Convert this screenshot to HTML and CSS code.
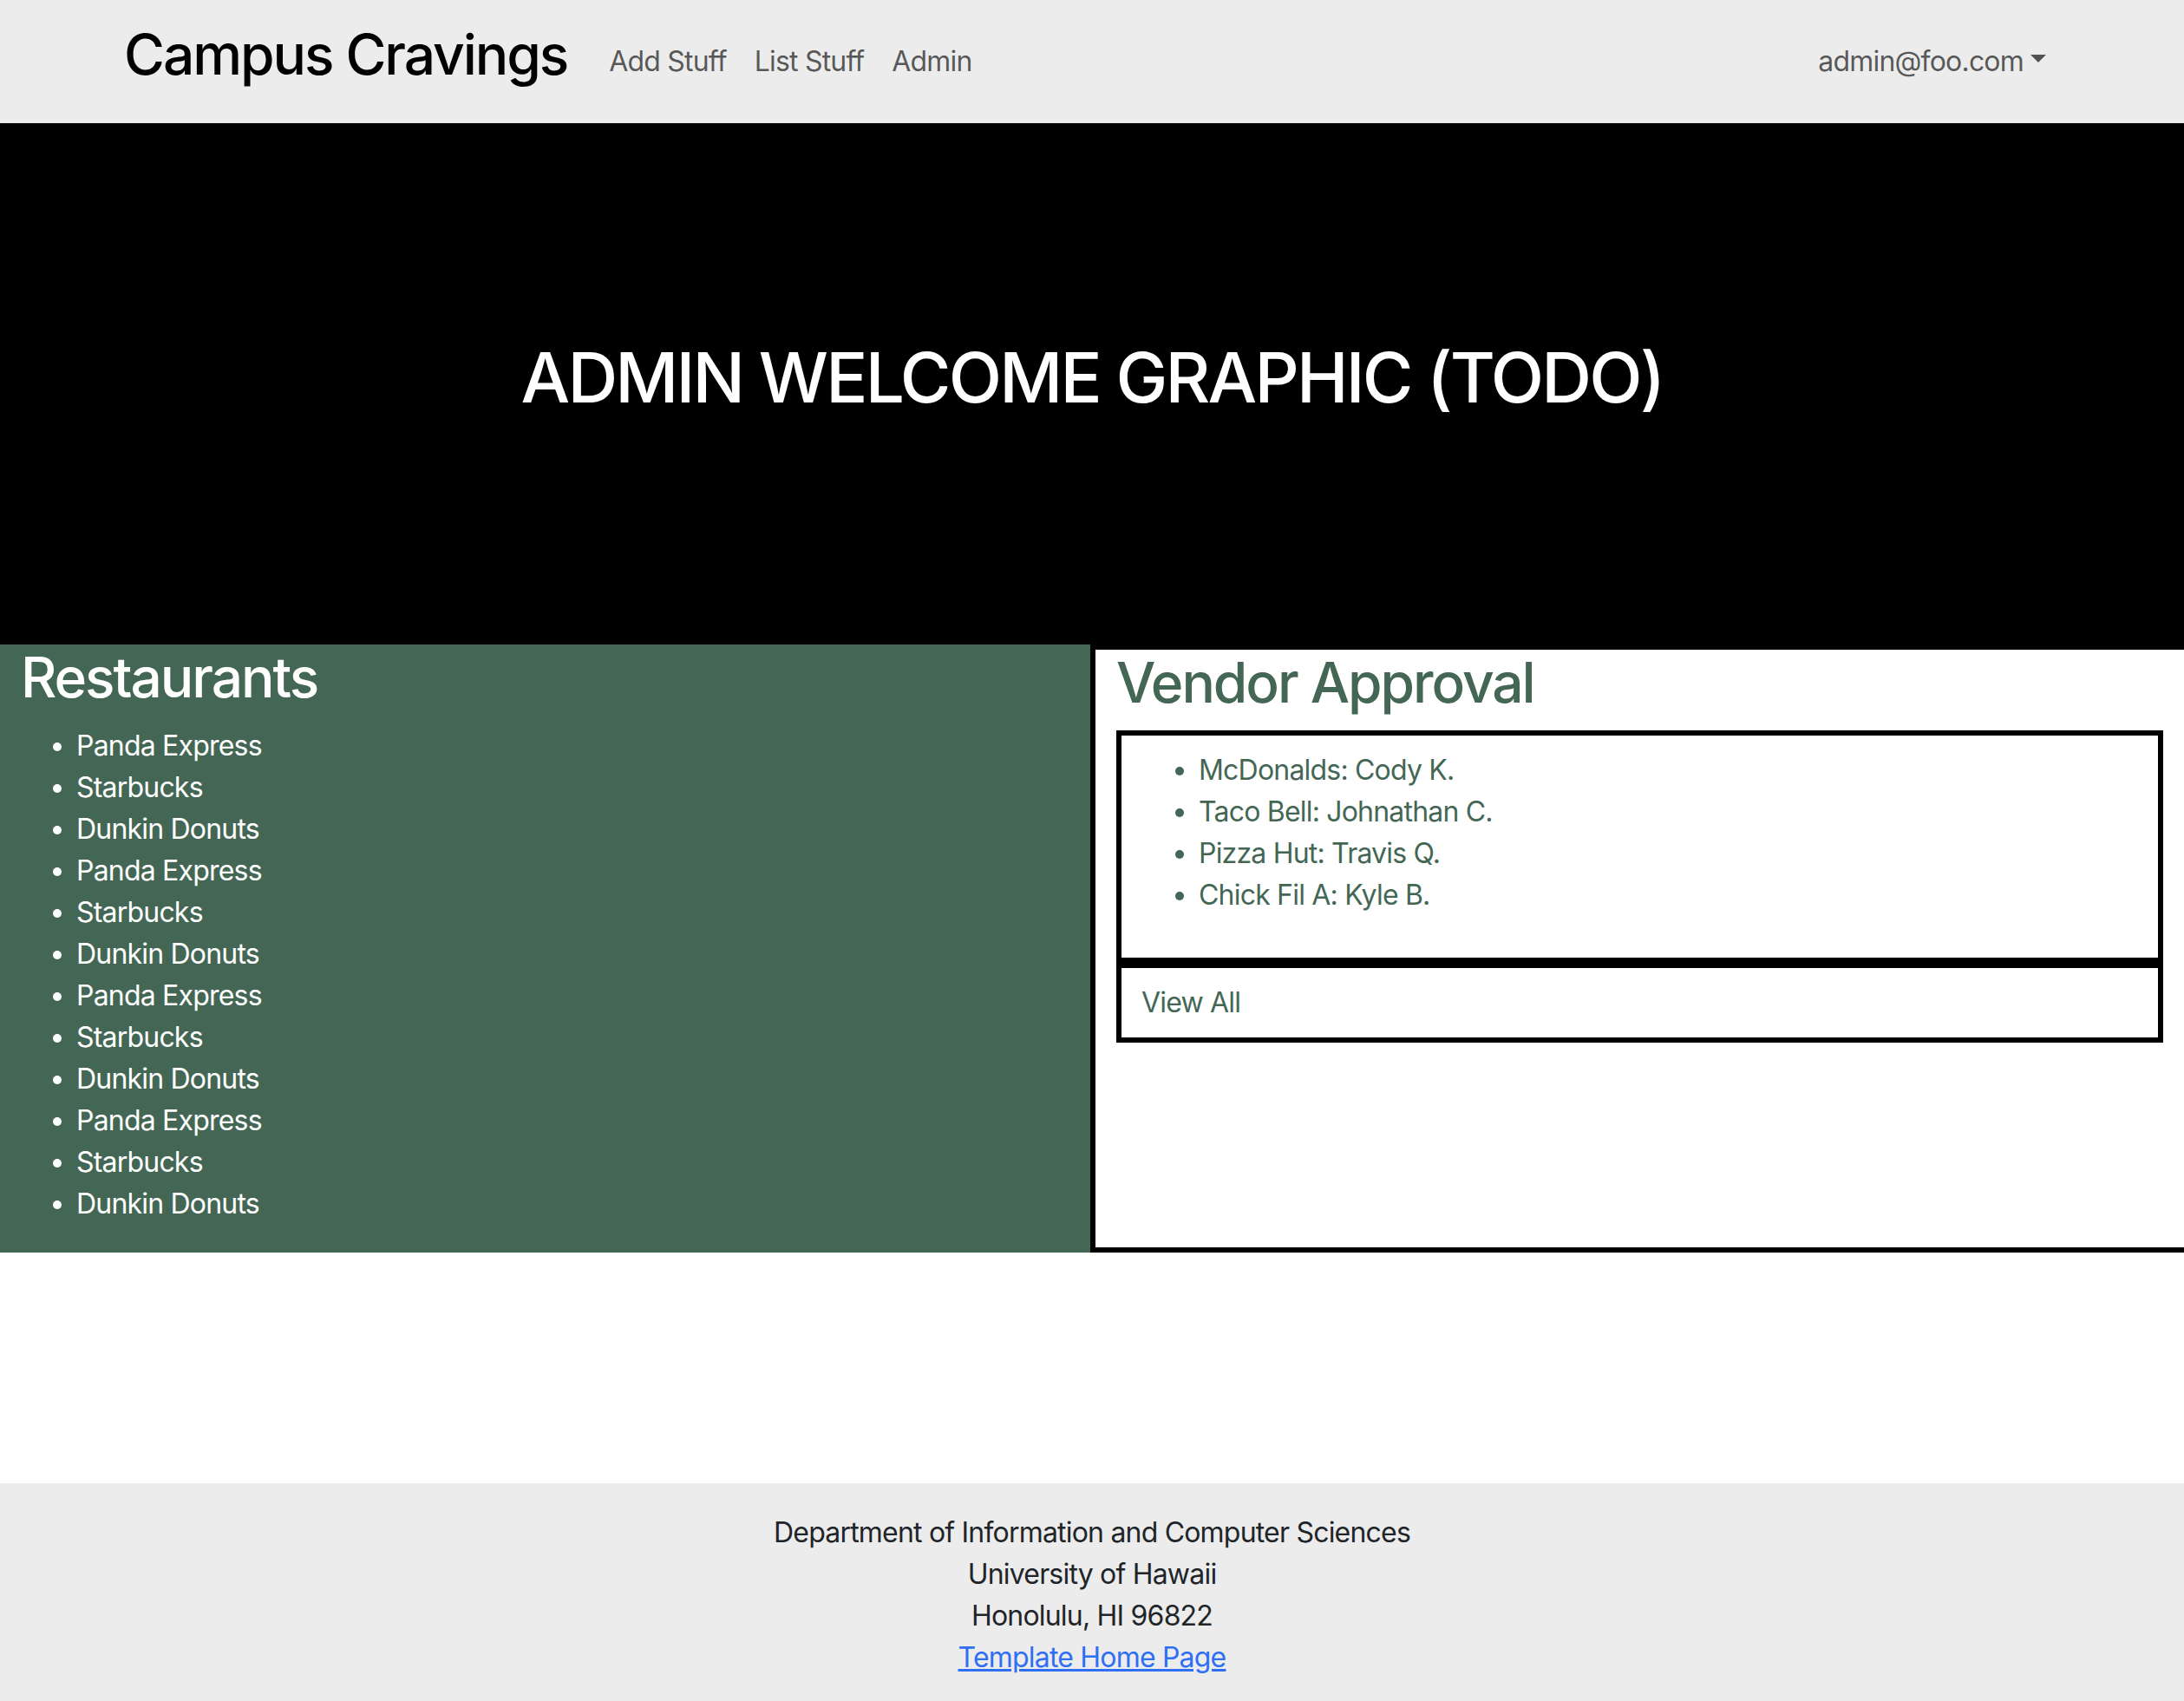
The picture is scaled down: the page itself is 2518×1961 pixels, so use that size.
FILE: index.html
```html
<!DOCTYPE html>
<html lang="en">
<head>
<meta charset="utf-8">
<title>Campus Cravings</title>
<link rel="stylesheet" href="styles.css">
</head>
<body>
<nav class="navbar">
  <div class="nav-container">
    <h2 class="brand">Campus Cravings</h2>
    <ul class="nav-links">
      <li><a class="nav-link" href="#">Add Stuff</a></li>
      <li><a class="nav-link" href="#">List Stuff</a></li>
      <li><a class="nav-link" href="#">Admin</a></li>
    </ul>
    <a class="nav-link user-toggle" href="#">admin@foo.com<span class="caret"></span></a>
  </div>
</nav>

<main class="main">
  <section class="hero">
    <h1 class="hero-title">ADMIN WELCOME GRAPHIC (TODO)</h1>
  </section>

  <div class="row">
    <section class="col restaurants">
      <h2 class="col-title">Restaurants</h2>
      <ul class="list">
        <li>Panda Express</li>
        <li>Starbucks</li>
        <li>Dunkin Donuts</li>
        <li>Panda Express</li>
        <li>Starbucks</li>
        <li>Dunkin Donuts</li>
        <li>Panda Express</li>
        <li>Starbucks</li>
        <li>Dunkin Donuts</li>
        <li>Panda Express</li>
        <li>Starbucks</li>
        <li>Dunkin Donuts</li>
      </ul>
    </section>

    <section class="col vendors">
      <h2 class="col-title vendor-title">Vendor Approval</h2>
      <div class="box">
        <ul class="list vendor-list">
          <li>McDonalds: Cody K.</li>
          <li>Taco Bell: Johnathan C.</li>
          <li>Pizza Hut: Travis Q.</li>
          <li>Chick Fil A: Kyle B.</li>
        </ul>
      </div>
      <div class="box box-footer">View All</div>
    </section>
  </div>
</main>

<footer class="footer">
  <div>Department of Information and Computer Sciences</div>
  <div>University of Hawaii</div>
  <div>Honolulu, HI 96822</div>
  <div><a class="footer-link" href="#">Template Home Page</a></div>
</footer>
</body>
</html>
```

FILE: styles.css
```css
* {
  box-sizing: border-box;
}

html, body {
  margin: 0;
  padding: 0;
}

body {
  font-family: Inter, "Noto Sans", "Liberation Sans", sans-serif;
  font-size: 32px;
  line-height: 1.5;
  letter-spacing: -0.025em;
  color: #212529;
  background: #fff;
}

h1, h2 {
  font-weight: 500;
  line-height: 1.2;
  margin: 0 0 16px 0;
  letter-spacing: -0.032em;
}

/* Navbar */
.navbar {
  background: #ececec;
  height: 142px;
  display: flex;
  align-items: center;
}

.nav-container {
  width: 2280px;
  margin: 0 auto;
  padding: 0 24px;
  display: flex;
  align-items: center;
}

.brand {
  font-size: 64px;
  color: #000;
  margin-right: 32px;
}

.nav-links {
  list-style: none;
  margin: 0;
  padding: 0;
  display: flex;
}

.nav-link {
  display: block;
  padding: 16px;
  color: rgba(0, 0, 0, 0.65);
  text-decoration: none;
}

.user-toggle {
  margin-left: auto;
  display: flex;
  align-items: center;
}

.caret {
  display: inline-block;
  margin-left: 8px;
  border-top: 9.6px solid rgba(0, 0, 0, 0.65);
  border-left: 9.6px solid transparent;
  border-right: 9.6px solid transparent;
  border-bottom: 0;
  position: relative;
  top: -3px;
}

/* Hero */
.hero {
  background: #000;
  height: 601px;
  display: flex;
  align-items: center;
  justify-content: center;
}

.hero-title {
  color: #fff;
  font-size: 80px;
  letter-spacing: -0.035em;
}

/* Columns */
.main {
  padding-bottom: 266px;
}

.row {
  display: grid;
  grid-template-columns: 1257px 1fr;
}

.col {
  padding: 0 24px;
}

.restaurants {
  background: #446755;
  color: #fff;
}

.col-title {
  font-size: 64px;
}

.list {
  margin: 0 0 32px 0;
  padding-left: 64px;
}

.vendors {
  background: #fff;
  border-top: 6px solid #000;
  border-left: 6px solid #000;
  border-bottom: 6px solid #000;
  color: #446755;
  padding-left: 24px;
}

.vendor-title {
  color: #446755;
}

.box {
  border: 6px solid #000;
  padding: 16px 25px;
}

.vendor-list {
  margin-bottom: 32px;
}

.box-footer {
  padding: 16px 23px;
}

/* Footer */
.footer {
  background: #ececec;
  text-align: center;
  padding: 33px 0 32px;
  color: #212529;
}

.footer-link {
  color: #2f6ff3;
  text-decoration: underline;
}
```
